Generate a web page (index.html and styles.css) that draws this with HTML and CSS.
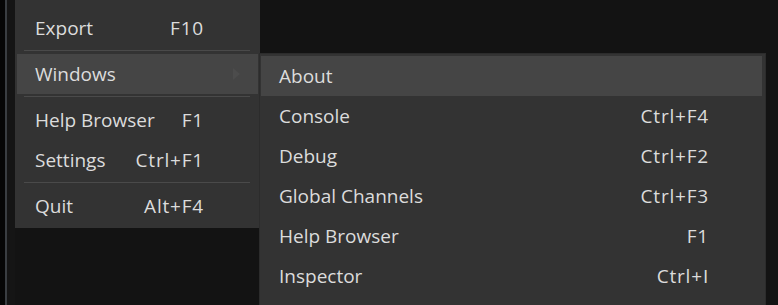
FILE: index.html
```html
<!DOCTYPE html>
<html lang="en">
<head>
  <meta charset="UTF-8" />
  <title>Menu</title>
  <link rel="stylesheet" href="styles.css">
</head>
<body>

<div class="edge"></div>
<div class="gutter"></div>

<div class="menu main-menu">
  <div class="item"><span>Export</span><span class="key">F10</span><span></span></div>
  <div class="sep"></div>
  <div class="item active"><span>Windows</span><span class="key"></span><span class="arrow"></span></div>
  <div class="sep"></div>
  <div class="item"><span>Help Browser</span><span class="key">F1</span><span></span></div>
  <div class="item"><span>Settings</span><span class="key">Ctrl+F1</span><span></span></div>
  <div class="sep"></div>
  <div class="item"><span>Quit</span><span class="key">Alt+F4</span><span></span></div>
</div>

<div class="menu sub-menu">
  <div class="item active"><span>About</span><span class="key"></span></div>
  <div class="item"><span>Console</span><span class="key">Ctrl+F4</span></div>
  <div class="item"><span>Debug</span><span class="key">Ctrl+F2</span></div>
  <div class="item"><span>Global Channels</span><span class="key">Ctrl+F3</span></div>
  <div class="item"><span>Help Browser</span><span class="key">F1</span></div>
  <div class="item"><span>Inspector</span><span class="key">Ctrl+I</span></div>
</div>

</body>
</html>
```

FILE: styles.css
```css
* {
  margin: 0; padding: 0; box-sizing: border-box;
}
body {
  background: #131313;
  color: #dcdcdc;
  font-family: 'Open Sans', 'Noto Sans', sans-serif;
  font-size: 19px;
  height: 305px;
  overflow: hidden;
  display: flex;
  align-items: flex-start;
}
.edge {
  width: 7px;
  height: 100%;
  background: #060606;
  border-right: 2px solid #3a3e42;
}
.gutter {
  width: 8px;
  height: 100%;
  background: #151515;
}
.menu {
  background: #333333;
  padding: 2px;
}
.main-menu {
  width: 245px;
  padding-top: 8px;
}
.sub-menu {
  width: 505px;
  margin-top: 54px;
  align-self: stretch;
  padding: 2px 3px 2px 1px;
  box-shadow: 0 0 0 1px #2c2c2c;
}
.item {
  height: 40px;
  display: grid;
  align-items: center;
  padding-left: 18px;
  white-space: nowrap;
}
.main-menu .item {
  grid-template-columns: 1fr auto 55px;
}
.sub-menu .item {
  grid-template-columns: 1fr auto;
  padding-right: 54px;
}
.item.active {
  background: #454545;
}
.key {
  text-align: right;
  letter-spacing: 0.8px;
  margin-right: -1px;
}
.arrow {
  width: 0;
  height: 0;
  margin-left: 30px;
  border-top: 6px solid transparent;
  border-bottom: 6px solid transparent;
  border-left: 7px solid #4c4c4c;
}
.sep {
  height: 1px;
  background: #4a4a4a;
  margin: 2px 8px 3px 7px;
}
```
